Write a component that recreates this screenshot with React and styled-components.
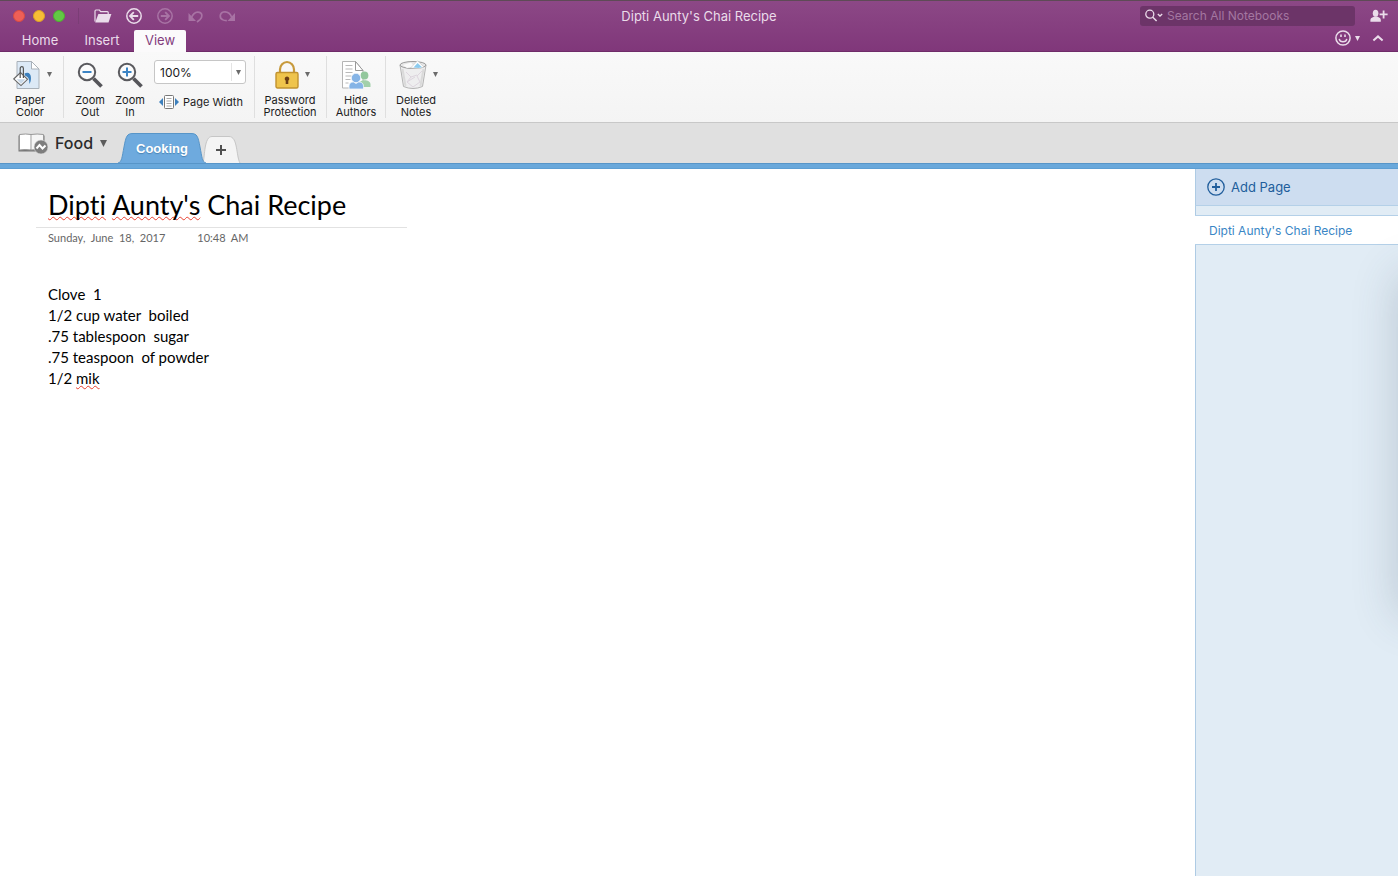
import React from "react";
import styled, { createGlobalStyle } from "styled-components";

const ui = `Inter, "Liberation Sans", sans-serif`;
const note = `Lato, "Open Sans", sans-serif`;

const GlobalStyle = createGlobalStyle`
  *, *::before, *::after { box-sizing: border-box; }
  body { margin: 0; background: #fff; font-family: ${ui}; }
  button, input, select { font-family: inherit; color: inherit; }
  button { background: none; border: 0; padding: 0; margin: 0; cursor: pointer; }
  svg { display: block; flex: none; }
`;

const Window = styled.div`
  min-height: 100vh;
  display: flex;
  flex-direction: column;
`;

const Header = styled.header`
  background: linear-gradient(#8c4886, #80377a);
  border-top: 1px solid #5e4a56;
  border-bottom: 1px solid #6f2c69;
  color: #eadcea;
`;

const TitleBar = styled.div`
  display: grid;
  grid-template-columns: 1fr auto 1fr;
  align-items: center;
  height: 29px;
`;

const Cluster = styled.div`
  display: flex;
  align-items: center;
`;

const Lights = styled(Cluster)`
  gap: 8px;
  padding: 0 13px;
  height: 16px;
  border-right: 1px solid #7b3d76;
`;

const Light = styled.button`
  width: 12px;
  height: 12px;
  border-radius: 50%;
  background: ${(p) => p.$color};
  border: 1px solid ${(p) => p.$edge};
`;

const QuickTools = styled(Cluster)`
  gap: 13px;
  padding-left: 15px;
`;

const IconButton = styled.button`
  display: flex;
  align-items: center;
  gap: 4px;
  color: ${(p) => (p.$dim ? "#a873a4" : "#eadcea")};
`;

const WindowTitle = styled.h1`
  margin: 0;
  font-size: 13px;
  line-height: 16px;
  font-weight: 400;
`;

const HeaderEnd = styled(Cluster)`
  justify-content: flex-end;
  gap: ${(p) => p.$gap}px;
  padding-right: ${(p) => p.$pad}px;
`;

const SearchBox = styled.label`
  display: flex;
  align-items: center;
  gap: 4px;
  width: 215px;
  height: 20px;
  padding: 0 5px;
  border-radius: 3px;
  background: #6c3468;
  color: #eadcea;
`;

const SearchInput = styled.input`
  flex: 1;
  min-width: 0;
  border: 0;
  padding: 0;
  outline: 0;
  background: transparent;
  font-size: 12px;
  line-height: 16px;
  &::placeholder { color: #a477a1; opacity: 1; }
`;

const TabBar = styled.div`
  display: flex;
  justify-content: space-between;
  align-items: flex-start;
  height: 21px;
`;

const Tabs = styled.nav`
  display: flex;
  gap: 4px;
  padding-left: 10px;
`;

const RibbonTab = styled.button`
  width: ${(p) => p.$w}px;
  height: 22px;
  padding-bottom: 2px;
  font-size: 13px;
  line-height: 20px;
  border-radius: 2px 2px 0 0;
  background: ${(p) => (p.$active ? "#fbfafb" : "transparent")};
  color: ${(p) => (p.$active ? "#833c7d" : "#eadcea")};
`;

const Ribbon = styled.div`
  display: flex;
  padding: 4px 0;
  height: 71px;
  background: linear-gradient(#f9f9f9, #f4f4f4);
  border-bottom: 1px solid #c8c8c8;
`;

const Group = styled.div`
  display: flex;
  gap: ${(p) => p.$gap || 0}px;
  padding: 0 ${(p) => p.$right}px 0 ${(p) => p.$left}px;
  border-right: 1px solid ${(p) => (p.$last ? "transparent" : "#dfdfdf")};
`;

const Tool = styled.button`
  width: ${(p) => p.$w}px;
  display: flex;
  flex-direction: column;
  align-items: center;
  gap: 1px;
  color: #1c1c1c;
`;

const ToolIcon = styled.span`
  display: flex;
  align-items: center;
  gap: 6px;
  height: 38px;
  color: #6b6b6b;
`;

const ToolLabel = styled.span`
  font-size: 11px;
  line-height: 12px;
  white-space: pre;
  text-align: center;
  padding-right: ${(p) => (p.$menu ? 4 : 0)}px;
`;

const ZoomStack = styled.div`
  display: flex;
  flex-direction: column;
  gap: 11px;
  padding-top: 4px;
`;

const ComboWrap = styled.label`
  position: relative;
  display: block;
  width: 92px;
  color: #6b6b6b;
`;

const ZoomSelect = styled.select`
  appearance: none;
  display: block;
  width: 100%;
  height: 24px;
  padding: 0 5px;
  border: 1px solid #c6c6c6;
  border-radius: 3px;
  background: linear-gradient(#e4e4e4, #e4e4e4) 76px 2px / 1px 18px no-repeat #fff;
  color: #1c1c1c;
  font-size: 12px;
`;

const ComboArrow = styled.span`
  position: absolute;
  right: 5px;
  top: 10px;
  pointer-events: none;
`;

const PageWidth = styled.button`
  display: flex;
  align-items: center;
  gap: 4px;
  padding-left: 5px;
  color: #1c1c1c;
  font-size: 11px;
  line-height: 14px;
  white-space: nowrap;
`;

const SectionBar = styled.div`
  display: flex;
  align-items: flex-end;
  height: 40px;
  padding-left: 18px;
  background: #e0e0e0;
`;

const Notebook = styled.button`
  display: flex;
  align-items: center;
  gap: 7px;
  width: 100px;
  height: 40px;
  color: #2b2b2b;
  font-size: 16px;
  font-weight: 500;
`;

const NotebookArrow = styled.span`
  color: #5c5c5c;
`;

const SectionTab = styled.button`
  position: relative;
  z-index: ${(p) => (p.$front ? 1 : 0)};
  width: ${(p) => p.$w}px;
  height: ${(p) => p.$h}px;
  margin-left: ${(p) => (p.$front ? 0 : -3)}px;
  color: #fff;
  font: 700 13px/16px "Liberation Sans", sans-serif;
  text-shadow: 0 1px 1px #4a83b4;
`;

const TabShape = styled.svg`
  position: absolute;
  left: 0;
  bottom: 0;
`;

const TabName = styled.span`
  display: block;
  position: relative;
  padding-top: 2px;
`;

const Accent = styled.div`
  height: 6px;
  background: #69a8db;
  border-top: 1px solid #5795c8;
  border-bottom: 1px solid #5d9ed3;
`;

const Body = styled.div`
  flex: 1;
  display: flex;
`;

const Page = styled.main`
  flex: 1;
  padding: 18px 36px;
  color: #000;
  font-family: ${note};
  font-variant-ligatures: none;
`;

const NoteTitle = styled.h2`
  max-width: 371px;
  margin: 0;
  padding: 0 12px 5px;
  border-bottom: 1px solid #e2e2e2;
  font-size: 27px;
  line-height: 35px;
  font-weight: 400;
  white-space: nowrap;
`;

const Misspelt = styled.span`
  text-decoration: underline wavy #e8402f 1px;
  text-decoration-skip-ink: none;
  text-underline-offset: ${(p) => p.$drop}px;
`;

const Stamp = styled.div`
  display: flex;
  gap: 32px;
  padding: 2px 12px 0;
  color: #666;
  font-size: 11px;
  line-height: 16px;
  white-space: pre;
`;

const Recipe = styled.div`
  padding: 38px 12px 0;
  font-size: 15px;
  line-height: 21px;
  white-space: pre;
  p { margin: 0; }
`;

const Sidebar = styled.aside`
  position: relative;
  overflow: hidden;
  width: 203px;
  background: linear-gradient(#aecbe4, #aecbe4) 0 0 / 1px 100% no-repeat #e1ecf5;
  &::after {
    content: "";
    position: absolute;
    left: 100%;
    top: 106px;
    width: 60px;
    height: 340px;
    box-shadow: 0 0 46px 0 rgba(60, 75, 95, 0.24);
  }
`;

const AddPage = styled.button`
  display: flex;
  align-items: center;
  gap: 6px;
  width: 100%;
  height: 37px;
  padding-left: 11px;
  background: #cdddf0;
  border-left: 1px solid #aecbe4;
  border-bottom: 1px solid #b4d0e8;
  color: #215e9c;
  font-size: 13px;
`;

const PageLink = styled.a`
  display: block;
  margin-top: 9px;
  padding: 2px 14px 0;
  border: solid #b4d0e8;
  border-width: 1px 0;
  background: #fff;
  color: #3a86c5;
  font-size: 12px;
  line-height: 26px;
  text-decoration: none;
  white-space: nowrap;
`;

const Caret = ({ w = 5, h = 5 }) => (
  <svg width={w} height={h} viewBox="0 0 5 5" preserveAspectRatio="none">
    <path d="M0 0h5L2.5 5z" fill="currentColor" />
  </svg>
);

const FolderIcon = () => (
  <svg width="18" height="14" viewBox="0 0 18 14" fill="currentColor">
    <path d="M1 12.5V2.2Q1 1 2 1h3.4l1.3 1.6h6.6q.9 0 .9 1V5" fill="none" stroke="currentColor" strokeWidth="1.2" />
    <path d="M4.4 5H17.4L14.5 13.4H1.2z" />
  </svg>
);

const CircleArrow = ({ flip }) => (
  <svg width="18" height="18" viewBox="0 0 18 18" fill="none" stroke="currentColor">
    <g transform={flip ? "matrix(-1 0 0 1 18 0)" : undefined}>
      <circle cx="9" cy="9" r="7.2" strokeWidth="1.5" />
      <path d="M13.2 9H5.4M8.8 5.2L5 9l3.8 3.8" strokeWidth="1.8" />
    </g>
  </svg>
);

const UndoIcon = () => (
  <svg width="18" height="14" viewBox="0 0 18 14" fill="none" stroke="currentColor">
    <path d="M4 9.500C6 4.500 9.500 2.600 12.400 3.400c3.200 1 3.200 5 .6 7.200l-3 2.400" strokeWidth="1.700" />
    <path d="M1.500 4v8H9z" fill="currentColor" stroke="none" />
  </svg>
);

const RedoIcon = () => (
  <svg width="18" height="14" viewBox="0 0 18 14" fill="none" stroke="currentColor">
    <path d="M13.800 8.500C12 3.800 8.800 2.400 5.400 3c-3.800 1-4.200 5.800-1 7.600 1.400.9 3 1 4.400 1" strokeWidth="1.700" />
    <path d="M17 4v8H9.500z" fill="currentColor" stroke="none" />
  </svg>
);

const SearchIcon = () => (
  <svg width="18" height="14" viewBox="0 0 18 14" fill="none" stroke="currentColor">
    <circle cx="4.8" cy="5.2" r="4" strokeWidth="1.3" />
    <path d="M7.8 8.2L11.6 12" strokeWidth="1.5" />
    <path d="M12.8 5l2.2 2 2.2-2" strokeWidth="1.3" />
  </svg>
);

const ShareIcon = () => (
  <svg width="18" height="14" viewBox="0 0 18 14" fill="currentColor">
    <ellipse cx="5.6" cy="4.2" rx="2.8" ry="3.5" />
    <path d="M.4 12.8v-2q0-2 2.4-2.5l1.6-.7h2.6l1.6.7q2.2.5 2.2 2.5v2z" />
    <path d="M9.6 5.4h8M13.6 1.4v8" stroke="currentColor" strokeWidth="1.8" />
  </svg>
);

const SmileIcon = () => (
  <svg width="16" height="16" viewBox="0 0 16 16" fill="none" stroke="currentColor">
    <circle cx="8" cy="8" r="7.1" strokeWidth="1.5" />
    <path d="M4.2 8.8c.6 4 7 4 7.6 0" strokeWidth="1.4" />
    <path d="M6 4.4v2.6M10 4.4v2.6" strokeWidth="1.6" />
  </svg>
);

const CollapseIcon = () => (
  <svg width="12" height="8" viewBox="0 0 12 8" fill="none" stroke="currentColor" strokeWidth="2">
    <path d="M1.4 6.4L6 2.4l4.6 4" />
  </svg>
);

const PaperIcon = () => (
  <svg width="28" height="30" viewBox="0 0 28 30">
    <path d="M4 1.5h14.500l7.500 7.500v19.500H4z" fill="#dce9f6" stroke="#a9b1b9" />
    <path d="M18.500 1.500V9H26z" fill="#fff" stroke="#a9b1b9" />
    <path d="M11.500 13.500c4-1.800 6.500.3 6.500 4.500 0 2.500-.6 4.500-1.600 6 0-4-.4-7-4.400-8.500z" fill="#3d80bd" />
    <path d="M.7 19L7.500 12.500l7 6.800L8 25.600z" fill="#fff" stroke="#666" strokeWidth="1.100" />
    <path d="M3.600 19.300h9L8 23.900z" fill="#c9d9e8" />
    <path d="M7.200 18V8.500C7.200 6 10.400 6 10.400 8.500V18" fill="none" stroke="#555" strokeWidth="1.200" />
  </svg>
);

const ZoomIcon = ({ plus }) => (
  <svg width="26" height="28" viewBox="0 0 26 28" fill="none">
    <path d="M16.500 17.500l8 8" stroke="#55555a" strokeWidth="3.800" />
    <circle cx="10" cy="11" r="8.200" fill="#fbfbfb" stroke="#5a5a5e" strokeWidth="2" />
    <path d={plus ? "M5.500 11h9M10 6.500v9" : "M5.500 11h9"} stroke="#3c84c4" strokeWidth="2" />
  </svg>
);

const LockIcon = () => (
  <svg width="24" height="30" viewBox="0 0 24 30">
    <path d="M5 14V9.500a7 7.500 0 0 1 14 0V14" fill="none" stroke="#c79a3c" strokeWidth="2.200" />
    <rect x="1" y="12.500" width="22" height="15.500" rx="1.500" fill="#efc44c" stroke="#c1922f" strokeWidth="1.400" />
    <path d="M12 16.500a2.300 2.300 0 0 1 1.300 4.200V24h-2.600v-3.300A2.300 2.300 0 0 1 12 16.500z" fill="#6b3e14" />
  </svg>
);

const AuthorsIcon = () => (
  <svg width="30" height="30" viewBox="0 0 30 30">
    <path d="M1.500 1.500h13l7.500 9V28H1.500z" fill="#fff" stroke="#b5b5b5" />
    <path d="M14.500 1.500v9H22z" fill="#fff" stroke="#999" />
    <path d="M4.500 5.500h7M4.500 9h7M4.500 12.500h7M4.500 16h6M4.500 19.500h5M4.500 23h3" stroke="#b9b9b9" />
    <circle cx="23.500" cy="15.500" r="3.900" fill="#93c79c" />
    <path d="M18 27v-3c0-5 11.500-5 11.500.5V27z" fill="#a2d0aa" />
    <circle cx="15" cy="18" r="4.700" fill="#85b4e6" stroke="#f5f8fb" strokeWidth=".8" />
    <path d="M8 29v-2.500c0-4 3-4.500 4.500-4.500l2.500 1.500 2.500-1.500c2 0 5 .5 5 4.500V29z" fill="#85b4e6" stroke="#f5f8fb" strokeWidth=".8" />
  </svg>
);

const TrashIcon = () => (
  <svg width="28" height="30" viewBox="0 0 28 30">
    <path d="M1 5l3.500 21.500q9.500 4 19 0L27 5z" fill="#eeeeef" stroke="#b4b4b4" />
    <path d="M7 12l5 5-4 5 6 5 7-5-3-6 5-5M12 17l6-2M8 22l8-5" stroke="#ddd5de" fill="none" />
    <path d="M3.500 9l3 17M24.500 9l-3 17" stroke="#dadada" strokeWidth="2" />
    <ellipse cx="14" cy="5" rx="13" ry="3.500" fill="#e6e6e6" stroke="#9c9c9c" />
    <path d="M4 5l8-2.500 3 4-7 1.500z" fill="#fafafa" />
    <path d="M11.500 8L18.500.8 25 7l-5 1.500z" fill="#fff" stroke="#c4c4c4" strokeWidth=".6" />
    <path d="M14.500 7.500L18.600 3 23 7.200l-3.500.8z" fill="#8ccbee" />
  </svg>
);

const FitIcon = () => (
  <svg width="20" height="14" viewBox="0 0 20 14">
    <path d="M0 7l4-4v8zM20 7l-4-4v8z" fill="#3d80bd" />
    <rect x="5.500" y=".5" width="9" height="13" rx="1" fill="#fff" stroke="#777" />
    <path d="M7.500 3.500h5M7.500 6h5M7.500 8.500h5M7.500 11h5" stroke="#aaa" />
  </svg>
);

const BookIcon = () => (
  <svg width="30" height="22" viewBox="0 0 30 22">
    <path d="M.5 3.500h26V19.500H.5z" fill="#777" />
    <path d="M1.500 2.500Q8 1.500 13 2.500V18q-6-1-11.500 0z" fill="#fff" stroke="#999" />
    <path d="M13 2.500q6-1 12.500 0V18q-6-1-12.500 0z" fill="#f5f5f5" stroke="#999" />
    <path d="M13 3v14" stroke="#ccc" strokeWidth="2" />
    <circle cx="23" cy="15" r="7" fill="#7d7d7d" stroke="#e0e0e0" strokeWidth=".6" />
    <path d="M18.500 16.500l3-3.500 3 3.500 3-3" fill="none" stroke="#fff" strokeWidth="2" />
  </svg>
);

const tools = {
  paper: { label: "Paper\nColor", w: 38, icon: <PaperIcon />, menu: true },
  out: { label: "Zoom\nOut", w: 32, icon: <ZoomIcon /> },
  in: { label: "Zoom\nIn", w: 32, icon: <ZoomIcon plus /> },
  lock: { label: "Password\nProtection", w: 58, icon: <LockIcon />, menu: true },
  authors: { label: "Hide\nAuthors", w: 42, icon: <AuthorsIcon /> },
  trash: { label: "Deleted\nNotes", w: 44, icon: <TrashIcon />, menu: true },
};

const RibbonTool = ({ tool }) => (
  <Tool $w={tool.w}>
    <ToolIcon>
      {tool.icon}
      {tool.menu && <Caret />}
    </ToolIcon>
    <ToolLabel $menu={tool.menu}>{tool.label}</ToolLabel>
  </Tool>
);

export default function App() {
  return (
    <Window>
      <GlobalStyle />
      <Header>
        <TitleBar>
          <Cluster>
            <Lights>
              <Light aria-label="Close" $color="#ee5f57" $edge="#d84b43" />
              <Light aria-label="Minimize" $color="#f7bd36" $edge="#dda127" />
              <Light aria-label="Full screen" $color="#62c944" $edge="#4dae31" />
            </Lights>
            <QuickTools>
              <IconButton aria-label="Open"><FolderIcon /></IconButton>
              <IconButton aria-label="Back"><CircleArrow /></IconButton>
              <IconButton aria-label="Forward" $dim><CircleArrow flip /></IconButton>
              <IconButton aria-label="Undo" $dim><UndoIcon /></IconButton>
              <IconButton aria-label="Redo" $dim><RedoIcon /></IconButton>
            </QuickTools>
          </Cluster>
          <WindowTitle>Dipti Aunty's Chai Recipe</WindowTitle>
          <HeaderEnd $pad={10} $gap={15}>
            <SearchBox>
              <SearchIcon />
              <SearchInput aria-label="Search" placeholder="Search All Notebooks" />
            </SearchBox>
            <IconButton aria-label="Share"><ShareIcon /></IconButton>
          </HeaderEnd>
        </TitleBar>
        <TabBar>
          <Tabs>
            <RibbonTab $w={60}>Home</RibbonTab>
            <RibbonTab $w={56}>Insert</RibbonTab>
            <RibbonTab $w={52} $active>View</RibbonTab>
          </Tabs>
          <HeaderEnd $pad={14} $gap={12}>
            <IconButton aria-label="Feedback"><SmileIcon /><Caret /></IconButton>
            <IconButton aria-label="Collapse ribbon"><CollapseIcon /></IconButton>
          </HeaderEnd>
        </TabBar>
      </Header>

      <Ribbon>
        <Group $left={13} $right={12}><RibbonTool tool={tools.paper} /></Group>
        <Group $left={10} $right={8} $gap={8}>
          <RibbonTool tool={tools.out} />
          <RibbonTool tool={tools.in} />
          <ZoomStack>
            <ComboWrap>
              <ZoomSelect aria-label="Zoom level" defaultValue="100%">
                <option>100%</option>
              </ZoomSelect>
              <ComboArrow><Caret /></ComboArrow>
            </ComboWrap>
            <PageWidth><FitIcon />Page Width</PageWidth>
          </ZoomStack>
        </Group>
        <Group $left={8} $right={5}><RibbonTool tool={tools.lock} /></Group>
        <Group $left={8} $right={8}><RibbonTool tool={tools.authors} /></Group>
        <Group $left={10} $right={8} $last><RibbonTool tool={tools.trash} /></Group>
      </Ribbon>

      <SectionBar>
        <Notebook>
          <BookIcon />
          Food
          <NotebookArrow><Caret w={7} h={7} /></NotebookArrow>
        </Notebook>
        <SectionTab $front $w={88} $h={30}>
          <TabShape width="88" height="30" viewBox="0 0 88 30">
            <path d="M0 30C4 29 4 24 6 14 8 3 9 .5 15 .5H73C79 .5 80 3 82 14 84 24 84 29 88 30" fill="#6eaade" stroke="#5795c8" />
          </TabShape>
          <TabName>Cooking</TabName>
        </SectionTab>
        <SectionTab aria-label="Add section" $w={38} $h={27}>
          <TabShape width="38" height="27" viewBox="0 0 38 27">
            <path d="M0 27C2 20 1 .5 9 .5H26C35 .5 33 20 37 27" fill="#f4f4f4" stroke="#c6c6c6" />
            <path d="M13 14h10M18 9v10" stroke="#505050" strokeWidth="2" />
          </TabShape>
        </SectionTab>
      </SectionBar>
      <Accent />

      <Body>
        <Page>
          <NoteTitle>
            <Misspelt $drop={1}>Dipti</Misspelt> <Misspelt $drop={1}>Aunty's</Misspelt> Chai Recipe
          </NoteTitle>
          <Stamp>
            <span>{"Sunday,  June  18,  2017"}</span>
            <span>{"10:48  AM"}</span>
          </Stamp>
          <Recipe>
            <p>{"Clove  1"}</p>
            <p>{"1/2 cup water  boiled"}</p>
            <p>{".75 tablespoon  sugar"}</p>
            <p>{".75 teaspoon  of powder"}</p>
            <p>1/2 <Misspelt $drop={1}>mik</Misspelt></p>
          </Recipe>
        </Page>
        <Sidebar>
          <AddPage>
            <svg width="18" height="18" viewBox="0 0 18 18" fill="none" stroke="currentColor">
              <circle cx="9" cy="9" r="8.200" strokeWidth="1.300" />
              <path d="M5 9h8M9 5v8" strokeWidth="1.800" />
            </svg>
            Add Page
          </AddPage>
          <PageLink href="#page">Dipti Aunty's Chai Recipe</PageLink>
        </Sidebar>
      </Body>
    </Window>
  );
}
